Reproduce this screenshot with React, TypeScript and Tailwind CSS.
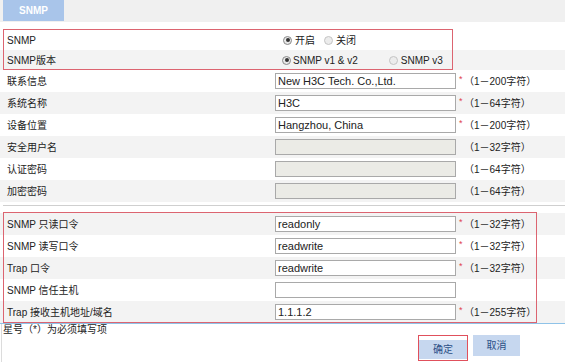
import React from 'react';

type Row = { label: string; value?: string; req?: boolean; hint?: string; disabled?: boolean };

const infoRows: Row[] = [
  { label: '联系信息', value: 'New H3C Tech. Co.,Ltd.', req: true, hint: '（1－200字符）' },
  { label: '系统名称', value: 'H3C', req: true, hint: '（1－64字符）' },
  { label: '设备位置', value: 'Hangzhou, China', req: true, hint: '（1－200字符）' },
  { label: '安全用户名', disabled: true, hint: '（1－32字符）' },
  { label: '认证密码', disabled: true, hint: '（1－64字符）' },
  { label: '加密密码', disabled: true, hint: '（1－64字符）' },
];

const communityRows: Row[] = [
  { label: 'SNMP 只读口令', value: 'readonly', req: true, hint: '（1－32字符）' },
  { label: 'SNMP 读写口令', value: 'readwrite', req: true, hint: '（1－32字符）' },
  { label: 'Trap 口令', value: 'readwrite', req: true, hint: '（1－32字符）' },
  { label: 'SNMP 信任主机', value: '' },
  { label: 'Trap 接收主机地址/域名', value: '1.1.1.2', req: true, hint: '（1－255字符）' },
];

function Radio({ checked }: { checked?: boolean }) {
  return (
    <span
      className={`inline-flex items-center justify-center w-[9px] h-[9px] rounded-full border ${
        checked ? 'border-[#8a8a8a] bg-[#e8e8e8]' : 'border-[#c4c4c4] bg-[#ececec]'
      }`}
    >
      {checked && <span className="w-[4px] h-[4px] rounded-full bg-[#333]" />}
    </span>
  );
}

function FieldRow({ row, gray }: { row: Row; gray: boolean }) {
  return (
    <div className={`flex items-center h-[22px] ${gray ? 'bg-[#f3f3f3]' : 'bg-white'}`}>
      <div className="w-[275px] pl-[7px] text-[10px] text-[#222]">{row.label}</div>
      <div
        className={`w-[181px] h-[16px] border border-[#a9a9a9] pl-[2px] flex items-center text-[11px] text-[#222] ${
          row.disabled ? 'bg-[#ebebe6]' : 'bg-white'
        }`}
      >
        {row.value}
      </div>
      <span className="w-[8px] pl-[3px] text-[9px] leading-none text-[#e0414f] -mt-[4px]">{row.req ? '*' : ''}</span>
      <span className="text-[10px] text-[#222]">{row.hint}</span>
    </div>
  );
}

export default function App() {
  return (
    <div
      className="relative w-[565px] h-[362px] bg-white overflow-hidden text-[#222]"
      style={{ fontFamily: '"Liberation Sans", "Noto Sans CJK SC", sans-serif' }}
    >
      <div className="h-[22px] bg-[#f0f0f0] pl-[3px]">
        <div className="w-[61px] h-[21px] bg-[#a9c5ea] flex items-center justify-center text-white text-[10px] font-semibold">
          SNMP
        </div>
      </div>

      <div className="mt-[8px]">
        <div className="flex items-center h-[20px] bg-white">
          <div className="w-[283px] pl-[7px] text-[10px]">SNMP</div>
          <Radio checked />
          <span className="ml-[3px] text-[10px]">开启</span>
          <span className="ml-[9px]"><Radio /></span>
          <span className="ml-[3px] text-[10px]">关闭</span>
        </div>
        <div className="flex items-center h-[20px] bg-[#f3f3f3]">
          <div className="w-[282px] pl-[7px] text-[10px]">SNMP版本</div>
          <Radio checked />
          <span className="ml-[2px] text-[10px]">SNMP v1 &amp; v2</span>
          <span className="ml-[31px]"><Radio /></span>
          <span className="ml-[3px] text-[10px]">SNMP v3</span>
        </div>
        {infoRows.map((r, i) => (
          <FieldRow key={r.label} row={r} gray={i % 2 === 1} />
        ))}
      </div>

      <div className="mt-[3px] border-t border-[#cfcfcf] ml-[3px]" />

      <div className="mt-[7px] border-b border-[#8fc3e8]">
        {communityRows.map((r, i) => (
          <FieldRow key={r.label} row={r} gray={i % 2 === 0} />
        ))}
      </div>

      <div className="border-l border-[#dcdcdc] ml-[1px] h-[40px]">
        <div className="pl-[1px] text-[10px] leading-[11px]">星号（*）为必须填写项</div>
        <div className="flex pl-[416px] gap-[5px]">
          <div className="border border-[#e0505c]">
            <button className="w-[48px] h-[19px] bg-[#c6d7ef] text-[10px] text-[#2b4f86]">确定</button>
          </div>
          <button className="w-[47px] h-[21px] bg-[#c6d7ef] text-[10px] text-[#2b4f86]">取消</button>
        </div>
      </div>

      {/* annotation boxes */}
      <div className="absolute left-[3px] top-[29px] w-[450px] h-[41px] border border-[#dc6470] pointer-events-none" />
      <div className="absolute left-[3px] top-[212px] w-[534px] h-[111px] border border-[#dc6470] pointer-events-none" />
    </div>
  );
}
